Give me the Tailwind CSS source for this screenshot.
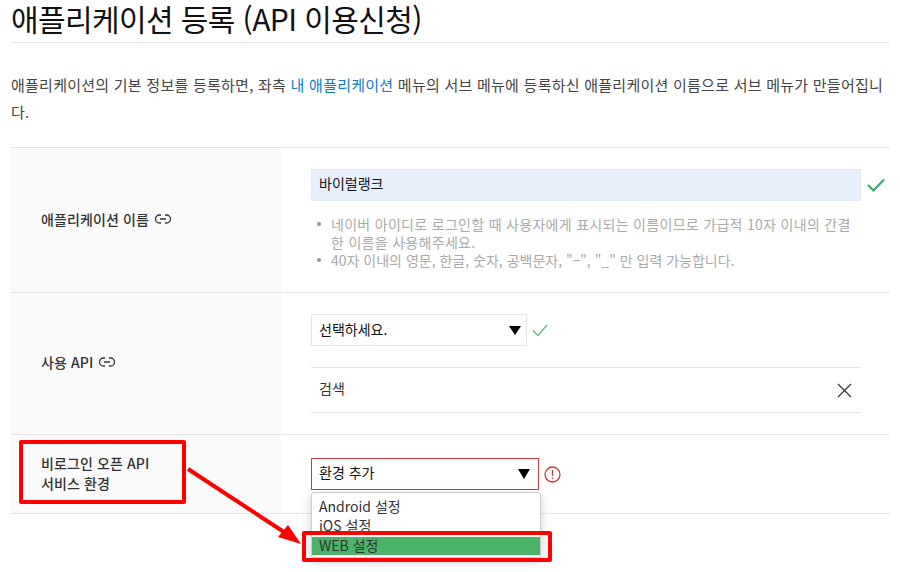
<!DOCTYPE html>
<html lang="ko">
<head>
  <meta charset="UTF-8">
  <title>애플리케이션 등록</title>
  <script src="https://cdn.jsdelivr.net/npm/@tailwindcss/browser@4"></script>
</head>
<body class="bg-white">
  <div class="relative w-[900px] h-[572px] overflow-hidden font-['Noto_Sans_CJK_KR','Noto_Sans',sans-serif] text-[#333]">
    <div class="pl-[11px] pr-[10px]">
      <!-- Title -->
      <h1 class="h-[43px] border-b border-[#e5e5e5] text-[30px] leading-[36px] font-normal text-[#111] tracking-[-0.6px]">애플리케이션 등록 (API 이용신청)</h1>
      <p class="mt-[28px] text-[15px] leading-[27px] text-[#444] tracking-[0.25px]">애플리케이션의 기본 정보를 등록하면, 좌측 <span class="text-[#0b7bd3]">내 애플리케이션</span> 메뉴의 서브 메뉴에 등록하신 애플리케이션 이름으로 서브 메뉴가 만들어집니다.</p>

      <!-- Form table -->
      <div class="mt-[22px] border-t border-[#e5e5e5]">
        <div class="flex h-[145px] border-b border-[#e5e5e5]">
          <div class="w-[270px] bg-[#fafafa] pl-[30px] flex items-center text-[14px] font-medium text-[#333] gap-[6px] pb-[2px] tracking-[0.1px]">
            <span>애플리케이션 이름</span>
            <svg class="w-[16px] h-[10px]" viewBox="0 0 16 10" fill="none" stroke="#333" stroke-width="1.3"><path d="M6 1H4.5a4 4 0 0 0 0 8H6M10 1h1.5a4 4 0 0 1 0 8H10M5 5h6"/></svg>
          </div>
          <div class="flex-1 pl-[30px] pt-[21px]">
            <div class="flex items-center">
              <div class="w-[550px] h-[32px] bg-[#e8f0fe] border border-[#e5e9f2] pl-[7px] pb-[3px] flex items-center text-[14px] text-[#111]">바이럴랭크</div>
              <svg class="ml-[6px] w-[18px] h-[14px]" viewBox="0 0 18 14" fill="none" stroke="#3cab6e" stroke-width="2.2"><path d="M1 7l5.5 5.5L17 1.5"/></svg>
            </div>
            <ul class="mt-[14px] w-[540px] pl-[20px] text-[14px] leading-[18px] text-[#aaa] list-none">
              <li class="relative tracking-[0.3px]"><span class="absolute -left-[14px] top-[7px] w-[4px] h-[4px] rounded-full bg-[#999]"></span>네이버 아이디로 로그인할 때 사용자에게 표시되는 이름이므로 가급적 10자 이내의 간결한 이름을 사용해주세요.</li>
              <li class="relative"><span class="absolute -left-[14px] top-[7px] w-[4px] h-[4px] rounded-full bg-[#999]"></span>40자 이내의 영문, 한글, 숫자, 공백문자, "–", "_" 만 입력 가능합니다.</li>
            </ul>
          </div>
        </div>

        <div class="flex h-[142px] border-b border-[#e5e5e5]">
          <div class="w-[270px] bg-[#fafafa] pl-[30px] flex items-center text-[14px] font-medium text-[#333] gap-[6px] pb-[3px] tracking-[0.1px]">
            <span>사용 API</span>
            <svg class="w-[16px] h-[10px]" viewBox="0 0 16 10" fill="none" stroke="#333" stroke-width="1.3"><path d="M6 1H4.5a4 4 0 0 0 0 8H6M10 1h1.5a4 4 0 0 1 0 8H10M5 5h6"/></svg>
          </div>
          <div class="flex-1 pl-[30px] pt-[21px]">
            <div class="flex items-center">
              <div class="w-[216px] h-[32px] border border-[#e5e5e5] pl-[7px] pr-[5px] flex items-center justify-between text-[14px] text-[#111]">
                <span class="-mt-[2px]">선택하세요.</span>
                <span class="w-0 h-0 border-l-[6px] border-r-[6px] border-t-[9px] border-l-transparent border-r-transparent border-t-black"></span>
              </div>
              <svg class="ml-[5px] w-[16px] h-[13px]" viewBox="0 0 16 13" fill="none" stroke="#5cb87a" stroke-width="1.3"><path d="M1 6.5l5 5L15 1"/></svg>
            </div>
            <div class="mt-[21px] w-[550px] h-[46px] border-y border-[#e5e5e5] pl-[8px] pr-[9px] flex items-center justify-between text-[14px] text-[#333]">
              <span class="-mt-[3px]">검색</span>
              <svg class="w-[15px] h-[15px]" viewBox="0 0 15 15" fill="none" stroke="#333" stroke-width="1.2"><path d="M1 1l13 13M14 1L1 14"/></svg>
            </div>
          </div>
        </div>

        <div class="flex h-[79px] border-b border-[#e5e5e5]">
          <div class="w-[270px] bg-[#fafafa] pl-[30px] flex items-center text-[14px] leading-[20px] font-medium text-[#333] pb-[3px] tracking-[0.1px]">
            <span>비로그인 오픈 API<br>서비스 환경</span>
          </div>
          <div class="flex-1 pl-[30px] pt-[23px]">
            <div class="flex items-center">
              <div class="w-[228px] h-[32px] border border-[#d0393e] pl-[7px] pr-[8px] flex items-center justify-between text-[14px] text-[#111]">
                <span class="-mt-[3px]">환경 추가</span>
                <span class="w-0 h-0 border-l-[6px] border-r-[6px] border-t-[10px] border-l-transparent border-r-transparent border-t-black"></span>
              </div>
              <svg class="ml-[5px] w-[17px] h-[17px]" viewBox="0 0 17 17" fill="none" stroke="#d0393e" stroke-width="1.3"><circle cx="8.5" cy="8.5" r="7.5"/><path d="M8.5 4v6M8.5 11.5v1.5"/></svg>
            </div>
          </div>
        </div>
      </div>
    </div>

    <!-- Open dropdown -->
    <div class="absolute left-[311px] top-[492px] w-[230px] h-[66px] bg-white border border-[#ccc] rounded-[3px] shadow-[0_4px_12px_rgba(0,0,0,0.18)] text-[14px] leading-[18px] text-[#333]">
      <div class="pl-[7px] pt-[4px] h-[23px]">Android 설정</div>
      <div class="pl-[7px] h-[21px]">iOS 설정</div>
      <div class="pl-[7px] h-[18px] leading-[16px] bg-[#4cb36b]">WEB 설정</div>
    </div>

    <!-- Red annotations -->
    <div class="absolute left-[19px] top-[440px] w-[167px] h-[64px] border-[4px] border-[#ff0000] rounded-[2px]"></div>
    <div class="absolute left-[302px] top-[531px] w-[250px] h-[31px] border-[4px] border-[#ff0000] rounded-[2px]"></div>
    <svg class="absolute left-0 top-0 w-[900px] h-[572px] pointer-events-none" viewBox="0 0 900 572" fill="none">
      <path d="M188 469L284 532" stroke="#ff0000" stroke-width="4"/>
      <path d="M301 544L278 537L288 525Z" fill="#ff0000"/>
    </svg>
  </div>
</body>
</html>
